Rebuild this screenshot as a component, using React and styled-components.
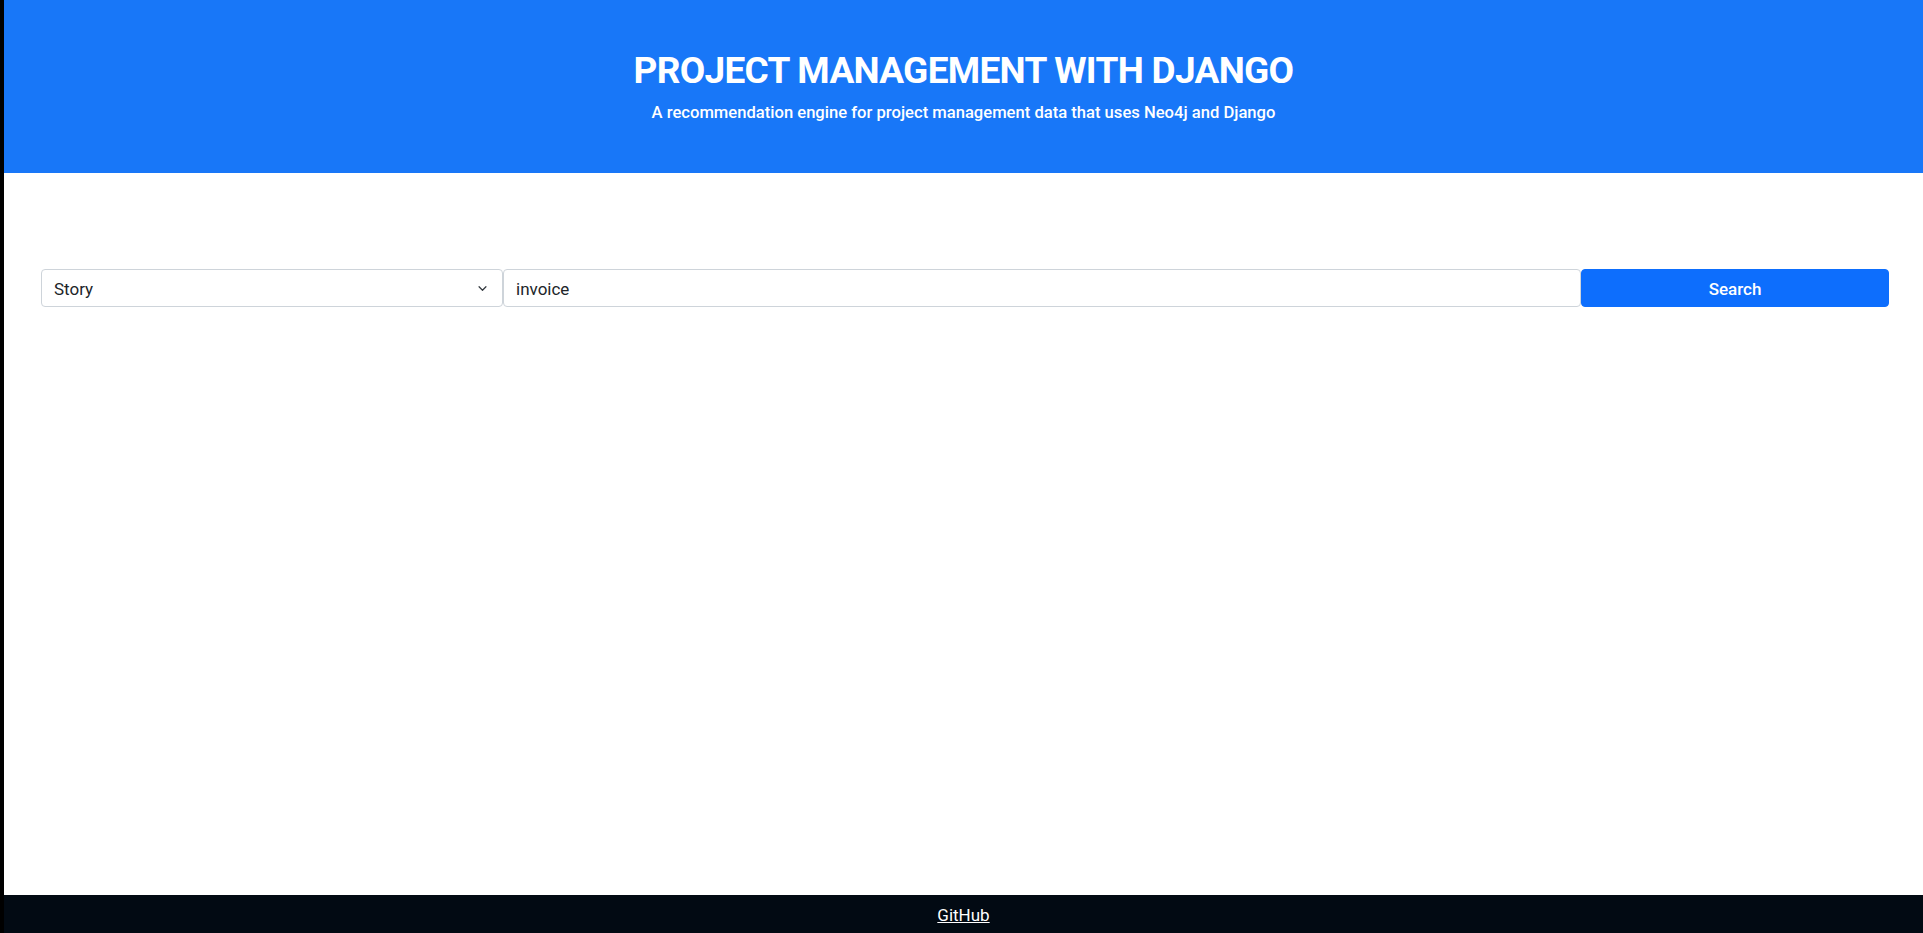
import styled, { createGlobalStyle } from "styled-components";

const GlobalStyle = createGlobalStyle`
  html, body {
    margin: 0;
    padding: 0;
    background: #000;
  }
  body {
    font-family: Roboto, "Noto Sans", "Liberation Sans", sans-serif;
    color: #212529;
  }
  * {
    box-sizing: border-box;
  }
`;

const categories = ["Story", "Task", "Project", "Person"];

const App = () => {
  return (
    <>
      <GlobalStyle />
      <Page>
        <Header>
          <Title>PROJECT MANAGEMENT WITH DJANGO</Title>
          <Subtitle>
            A recommendation engine for project management data that uses Neo4j and Django
          </Subtitle>
        </Header>
        <Main>
          <SearchForm onSubmit={(e) => e.preventDefault()}>
            <SelectWrap>
              <Select defaultValue="Story">
                {categories.map((c) => (
                  <option key={c} value={c}>
                    {c}
                  </option>
                ))}
              </Select>
              <Chevron viewBox="0 0 16 16">
                <path
                  d="M3 5.5l5 5 5-5"
                  fill="none"
                  stroke="#343a40"
                  strokeWidth="1.8"
                  strokeLinecap="round"
                  strokeLinejoin="round"
                />
              </Chevron>
            </SelectWrap>
            <Input type="text" defaultValue="invoice" />
            <SearchButton type="submit">Search</SearchButton>
          </SearchForm>
        </Main>
        <Footer>
          <FooterLink href="#">GitHub</FooterLink>
        </Footer>
      </Page>
    </>
  );
};

const Page = styled.div`
  margin-left: 4px;
  min-height: 100vh;
  display: flex;
  flex-direction: column;
  background: #fff;
`;

const Header = styled.header`
  height: 173px;
  background: #1877f8;
  color: #fff;
  text-align: center;
  padding-top: 49px;
`;

const Title = styled.h1`
  margin: 0;
  font-size: 37px;
  line-height: 1.2;
  font-weight: 700;
  letter-spacing: -0.7px;
`;

const Subtitle = styled.p`
  margin: 8px 0 0;
  font-size: 16.6px;
  line-height: 1.5;
  font-weight: 500;
`;

const Main = styled.main`
  flex: 1;
  padding: 96px 34px 0 37px;
`;

const SearchForm = styled.form`
  display: grid;
  grid-template-columns: 3fr 7fr 2fr;
  height: 38px;
`;

const SelectWrap = styled.div`
  position: relative;
`;

const Select = styled.select`
  appearance: none;
  width: 100%;
  height: 38px;
  padding: 2px 36px 0 12px;
  font-family: inherit;
  font-size: 17px;
  color: #212529;
  background: #fff;
  border: 1px solid #ced4da;
  border-radius: 4px;
  outline: none;
`;

const Chevron = styled.svg`
  position: absolute;
  right: 15px;
  top: 14px;
  width: 11px;
  height: 11px;
  pointer-events: none;
`;

const Input = styled.input`
  height: 38px;
  padding: 2px 12px 0;
  font-family: inherit;
  font-size: 17px;
  color: #212529;
  border: 1px solid #ced4da;
  border-radius: 4px;
  outline: none;
`;

const SearchButton = styled.button`
  height: 38px;
  padding-top: 2px;
  font-family: inherit;
  font-size: 17px;
  font-weight: 500;
  color: #fff;
  background: #0d6efd;
  border: 1px solid #0d6efd;
  border-radius: 4px;
  cursor: pointer;
`;

const Footer = styled.footer`
  height: 38px;
  padding-top: 1px;
  background: #020a13;
  display: flex;
  align-items: center;
  justify-content: center;
`;

const FooterLink = styled.a`
  color: #fff;
  font-size: 17px;
  text-decoration: underline;
`;

export default App;
